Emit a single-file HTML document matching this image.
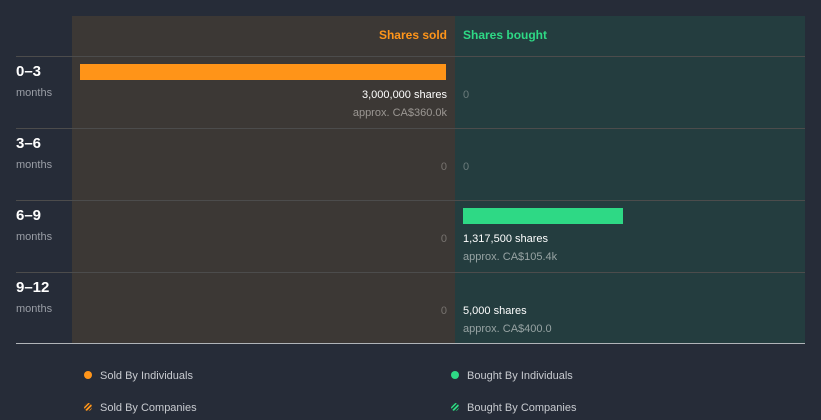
<!DOCTYPE html><html><head><style>
body{margin:0;width:821px;height:420px;background:#262c38;font-family:"Liberation Sans",sans-serif;position:relative;overflow:hidden}
div{position:absolute}
.t{font-size:11px;white-space:nowrap;margin-top:1px}
</style></head><body>
<div style="left:72px;top:16px;width:383px;height:327px;background:#3c3835"></div>
<div style="left:455px;top:16px;width:350px;height:327px;background:#243d3f"></div>
<div class="t" style="left:72px;width:375px;top:27px;text-align:right;color:#ff951a;font-weight:bold;font-size:12px">Shares sold</div>
<div class="t" style="left:463px;top:27px;color:#2ed985;font-weight:bold;font-size:12px">Shares bought</div>
<div style="left:16px;top:56px;width:789px;height:1px;background:#4c4c4c"></div>
<div style="left:16px;top:128px;width:789px;height:1px;background:#4c4c4c"></div>
<div style="left:16px;top:200px;width:789px;height:1px;background:#4c4c4c"></div>
<div style="left:16px;top:272px;width:789px;height:1px;background:#4c4c4c"></div>
<div style="left:16px;top:343px;width:789px;height:1px;background:#b0b4b8"></div>
<div class="t" style="left:16px;top:62px;color:#fff;font-size:15px;font-weight:bold">0–3</div>
<div class="t" style="left:16px;top:86px;color:#9a9ea6">months</div>
<div class="t" style="left:16px;top:134px;color:#fff;font-size:15px;font-weight:bold">3–6</div>
<div class="t" style="left:16px;top:158px;color:#9a9ea6">months</div>
<div class="t" style="left:16px;top:206px;color:#fff;font-size:15px;font-weight:bold">6–9</div>
<div class="t" style="left:16px;top:230px;color:#9a9ea6">months</div>
<div class="t" style="left:16px;top:278px;color:#fff;font-size:15px;font-weight:bold">9–12</div>
<div class="t" style="left:16px;top:302px;color:#9a9ea6">months</div>
<div style="left:80px;top:64px;width:366px;height:16px;background:#ff9418"></div>
<div class="t" style="left:72px;width:375px;text-align:right;top:88px;color:#fff">3,000,000 shares</div>
<div class="t" style="left:72px;width:375px;text-align:right;top:106px;color:#9b9793">approx. CA$360.0k</div>
<div class="t" style="left:463px;top:88px;color:#6b7b7b">0</div>
<div class="t" style="left:72px;width:375px;text-align:right;top:160px;color:#77736f">0</div>
<div class="t" style="left:463px;top:160px;color:#6b7b7b">0</div>
<div class="t" style="left:72px;width:375px;text-align:right;top:232px;color:#77736f">0</div>
<div style="left:463px;top:208px;width:160px;height:16px;background:#2ed985"></div>
<div class="t" style="left:463px;top:232px;color:#fff">1,317,500 shares</div>
<div class="t" style="left:463px;top:250px;color:#97a3a3">approx. CA$105.4k</div>
<div class="t" style="left:72px;width:375px;text-align:right;top:304px;color:#77736f">0</div>
<div class="t" style="left:463px;top:304px;color:#fff">5,000 shares</div>
<div class="t" style="left:463px;top:322px;color:#97a3a3">approx. CA$400.0</div>
<div style="left:84px;top:371px;width:8px;height:8px;border-radius:50%;background:#ff951a"></div>
<div class="t" style="left:100px;top:369px;color:#c8cbd0">Sold By Individuals</div>
<div style="left:84px;top:403px;width:8px;height:8px;border-radius:50%;background:repeating-linear-gradient(135deg,#ff951a 0 1.5px,#3a3430 1.5px 3px)"></div>
<div class="t" style="left:100px;top:401px;color:#c8cbd0">Sold By Companies</div>
<div style="left:451px;top:371px;width:8px;height:8px;border-radius:50%;background:#2ed985"></div>
<div class="t" style="left:467px;top:369px;color:#c8cbd0">Bought By Individuals</div>
<div style="left:451px;top:403px;width:8px;height:8px;border-radius:50%;background:repeating-linear-gradient(135deg,#2ed985 0 1.5px,#1f3a35 1.5px 3px)"></div>
<div class="t" style="left:467px;top:401px;color:#c8cbd0">Bought By Companies</div>
</body></html>
